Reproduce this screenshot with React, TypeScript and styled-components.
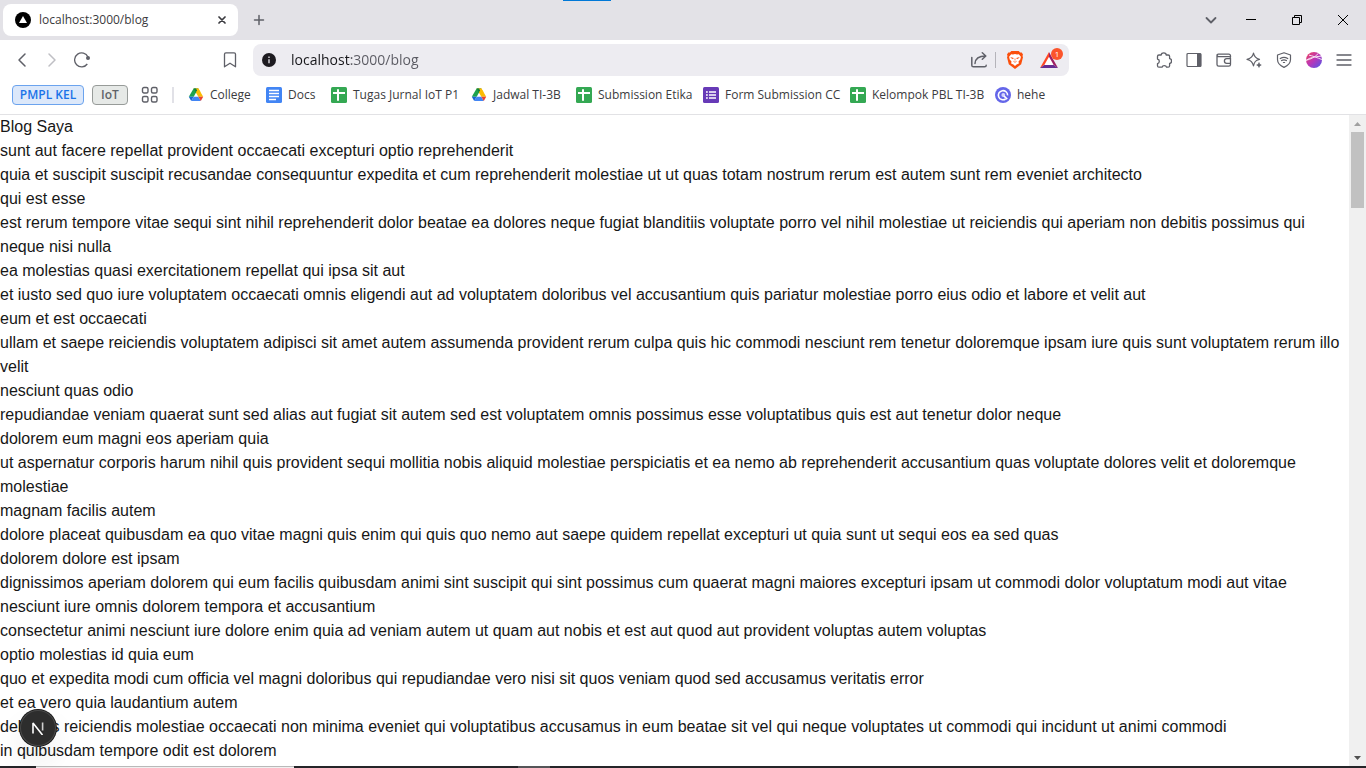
import React from "react";
import styled, { createGlobalStyle } from "styled-components";

const GlobalStyle = createGlobalStyle`
  *, *::before, *::after { box-sizing: border-box; }
  body { margin: 0; background: #fff; overflow: hidden; }
  button, input { font: inherit; margin: 0; }
`;

const uiFont = `"Segoe UI", "Open Sans", "Noto Sans", sans-serif`;

const Browser = styled.div`
  display: flex;
  flex-direction: column;
  height: 100vh;
  font-family: ${uiFont};
  font-size: 12px;
  color: #3b3b40;
`;

/* ---------- tab strip ---------- */

const TabStrip = styled.header`
  position: relative;
  flex: none;
  display: flex;
  align-items: center;
  height: 40px;
  padding-left: 3px;
  background: #e3e2e7;
`;

const LoadingMark = styled.span`
  position: absolute;
  top: 0;
  left: 563px;
  width: 48px;
  height: 1px;
  background: #0078d7;
`;

const Tab = styled.div`
  display: flex;
  align-items: center;
  width: 235px;
  height: 32px;
  padding: 0 8px 0 12px;
  border-radius: 8px;
  background: #fff;
`;

const TabTitle = styled.span`
  flex: 1;
  padding-left: 8px;
  line-height: 16px;
`;

const IconButton = styled.button<{ $w?: number; $h?: number }>`
  flex: none;
  display: flex;
  align-items: center;
  justify-content: center;
  width: ${(p) => p.$w ?? 30}px;
  height: ${(p) => p.$h ?? 32}px;
  padding: 0;
  border: 0;
  background: transparent;
  color: #5f6068;
`;

const WindowControls = styled.div`
  display: flex;
  margin-left: auto;
`;

/* ---------- toolbar ---------- */

const Toolbar = styled.div`
  flex: none;
  display: flex;
  align-items: center;
  height: 40px;
  padding: 0 7px;
`;

const NavGroup = styled.div`
  display: flex;
  justify-content: space-between;
  width: 238px;
  margin-right: 8px;
`;

const Cluster = styled.div`
  display: flex;
  align-items: center;
`;

const AddressBar = styled.form`
  flex: 1;
  min-width: 0;
  display: flex;
  align-items: center;
  height: 32px;
  padding-right: 5px;
  border-radius: 8px;
  background: #edecf1;
`;

const AddressInput = styled.input`
  flex: 1;
  min-width: 0;
  height: 24px;
  padding: 0 0 0 6px;
  border: 0;
  outline: 0;
  font-size: 14px;
  line-height: 24px;
  color: #4b4b52;
  background: linear-gradient(to right, #17171b 66px, #5a5a62 66px);
  background-clip: text;
  -webkit-text-fill-color: transparent;
`;

const AddressDivider = styled.span`
  width: 1px;
  height: 16px;
  margin-left: 1px;
  background: #b5b4ba;
`;

const BadgeHolder = styled.span`
  position: relative;
  display: flex;
`;

const Badge = styled.span`
  position: absolute;
  top: -4px;
  right: -5px;
  width: 12px;
  height: 12px;
  border-radius: 6px;
  background: #fb542b;
  color: #fff;
  font-size: 8px;
  line-height: 12px;
  text-align: center;
`;

const Extensions = styled.div`
  display: flex;
  margin-left: 80px;
`;

/* ---------- bookmarks ---------- */

const BookmarksBar = styled.nav`
  flex: none;
  display: flex;
  align-items: center;
  height: 35px;
  padding: 0 12px 4px;
  border-bottom: 1px solid #e2e2e5;
  white-space: nowrap;
  overflow: hidden;
`;

const GroupChip = styled.button<{ $w: number; $blue?: boolean }>`
  flex: none;
  width: ${(p) => p.$w}px;
  height: 20px;
  margin-right: 8px;
  padding: 0;
  border: 1px solid ${(p) => (p.$blue ? "#6ba3ee" : "#979b99")};
  border-radius: 4px;
  background: ${(p) => (p.$blue ? "#dce8fa" : "#e6e9e7")};
  color: ${(p) => (p.$blue ? "#1a73e8" : "#5f6368")};
  font-weight: 600;
  line-height: 18px;
`;

const BarDivider = styled.span`
  width: 2px;
  height: 16px;
  margin: 0 14px 0 8px;
  background: #e1e1e7;
`;

const Bookmark = styled.a<{ $w: number }>`
  flex: none;
  display: flex;
  align-items: center;
  gap: 6px;
  width: ${(p) => p.$w}px;
  line-height: 16px;
  color: inherit;
  text-decoration: none;

  svg { flex: none; }
`;

/* ---------- page ---------- */

const Viewport = styled.div`
  flex: 1;
  min-height: 0;
  display: flex;
`;

const Page = styled.main`
  flex: 1;
  min-width: 0;
  overflow: hidden;
  font-family: Arial, "Liberation Sans", sans-serif;
  font-size: 16px;
  line-height: 24px;
  color: #171717;

  h1, h2, p {
    margin: 0;
    font-size: inherit;
    font-weight: 400;
  }
`;

const Scrollbar = styled.div`
  flex: none;
  display: flex;
  flex-direction: column;
  align-items: center;
  width: 17px;
  background: #f0f0f0;
`;

const Thumb = styled.div`
  width: 13px;
  height: 76px;
  margin-bottom: auto;
  background: #c1c1c1;
`;

const DevButton = styled.button`
  position: fixed;
  left: 20px;
  bottom: 22px;
  display: flex;
  align-items: center;
  justify-content: center;
  width: 36px;
  height: 36px;
  padding: 0;
  border: 0;
  border-radius: 50%;
  background: #2d2d2d;
  box-shadow: 0 0 0 1px #171717, inset 0 0 0 1px #484848,
    0 16px 32px -8px rgba(0, 0, 0, 0.24);
`;

const Taskbar = styled.footer`
  flex: none;
  display: flex;
  height: 2px;
  padding-left: 36px;
  background: #252529;
`;

const TaskSearch = styled.span`
  width: 258px;
  border-top: 1px solid #b9b9b9;
  background: #f0f0f0;
`;

const TaskItem = styled.span`
  width: 32px;
  margin-left: 224px;
  background: #555558;
`;

/* ---------- icons ---------- */

type LineProps = { d: string; size?: number; w?: number; color?: string };

const Line = ({ d, size = 16, w = 1.3, color = "currentColor" }: LineProps) => (
  <svg width={size} height={size} viewBox={`0 0 ${size} ${size}`} fill="none"
    stroke={color} strokeWidth={w} strokeLinecap="round" strokeLinejoin="round" aria-hidden="true">
    <path d={d} />
  </svg>
);

const DriveIcon = () => (
  <svg width="16" height="16" viewBox="0 0 16 16" aria-hidden="true">
    <path d="M5.6 1.4h4.8l4.8 8.4h-4.9z" fill="#fbbc04" />
    <path d="M5.6 1.4h2.4L8 5.5 5.7 9.8H.8z" fill="#1ea34f" />
    <path d="M5.6 1.4h4.8L8 5.5z" fill="#188038" />
    <path d="M8 1.4h2.4l2.4 4.2L8 5.5 9.200 3.400z" fill="#fbbc04" />
    <path d="M.8 9.8h4.9L3.2 14z" fill="#1967d2" />
    <path d="M3.2 14l2.5-4.2h4.6l2.5 4.2z" fill="#4285f4" />
    <path d="M10.3 9.8h4.9L12.8 14z" fill="#ea4335" />
  </svg>
);

const DocsIcon = () => (
  <svg width="16" height="16" viewBox="0 0 16 16" aria-hidden="true">
    <rect width="16" height="16" rx="1.5" fill="#4285f4" />
    <path d="M3 3.5h10M3 6.5h10M3 9.5h10M3 12.5h7" stroke="#fff" strokeWidth="1.5" />
  </svg>
);

const SheetIcon = () => (
  <svg width="16" height="16" viewBox="0 0 16 16" aria-hidden="true">
    <rect width="16" height="16" rx="1.5" fill="#34a853" />
    <path d="M2 6h12M7 2.2v11.6" stroke="#fff" strokeWidth="2" />
  </svg>
);

const FormIcon = () => (
  <svg width="16" height="16" viewBox="0 0 16 16" aria-hidden="true">
    <rect width="16" height="16" rx="1.5" fill="#673ab7" />
    <path d="M3 5h1.8M3 8h1.8M3 11h1.8M6 5h7M6 8h7M6 11h7" stroke="#fff" strokeWidth="1.6" />
  </svg>
);

const HeheIcon = () => (
  <svg width="16" height="16" viewBox="0 0 16 16" aria-hidden="true">
    <circle cx="8" cy="8" r="8" fill="#6466e9" />
    <path d="M10.6 12A4.6 4.6 0 1 1 12.6 8.4" fill="none" stroke="#fff" strokeWidth="1.6" />
    <circle cx="8.3" cy="8" r="1.9" fill="#d5d6fb" />
    <path d="M9 9l3.2 3.2" stroke="#fff" strokeWidth="1.7" />
  </svg>
);

const BraveIcon = () => (
  <svg width="18" height="18" viewBox="0 0 18 18" aria-hidden="true">
    <path d="M5.3 0h7.4l1.4 1.6 1.6-.2 1.3 2.2-.5 1.3.5 1.3-1.8 7L9 18l-6.2-4.8L1 6.2l.5-1.3L1 3.6l1.3-2.2 1.6.2z" fill="#fb4f0c" />
    <path d="M5.2 3.3 7 3.6l2-.5 2 .5 1.8-.3 2.1 2.5-.6 2.6-1.8 2.100.400 2-2.300 1-1.600 1.400-1.600-1.400-2.300-1 .400-2-1.800-2.100-.6-2.6z" fill="#fff" />
    <path d="m4.700 6.600 2.700.500-.400.800zm8.600 0-2.700.500.400.800z" fill="#fb4f0c" stroke="#fb4f0c" strokeWidth=".4" />
    <path d="M9 7.500v2M7.400 10.300 9 11.300l1.600-1" stroke="#fb4f0c" strokeWidth=".7" fill="none" />
  </svg>
);

const BatIcon = () => (
  <svg width="18" height="16" viewBox="0 0 18 16" aria-hidden="true">
    <path d="M9 4.3 14.2 13.3H3.8z" fill="#fff" />
    <path d="M9 0v4.8L4.3 13 0 16z" fill="#ff4724" />
    <path d="M9 0l9 16-4.3-3L9 4.8z" fill="#9e1f63" />
    <path d="M0 16l4.3-3h9.4L18 16z" fill="#662d91" />
  </svg>
);

const ProfileIcon = () => (
  <svg width="16" height="16" viewBox="0 0 16 16" aria-hidden="true">
    <defs>
      <linearGradient id="orb" x1="0" y1="0" x2="1" y2="1">
        <stop offset="0" stopColor="#f0435c" />
        <stop offset=".5" stopColor="#b936b8" />
        <stop offset="1" stopColor="#4a57ea" />
      </linearGradient>
      <clipPath id="orb-edge"><circle cx="8" cy="8" r="8" /></clipPath>
    </defs>
    <g clipPath="url(#orb-edge)">
      <rect width="16" height="16" fill="url(#orb)" />
      <path d="M0 8.4C5 7.2 9 5 12.4 1.4M3 3.2c3 .4 8 2.4 13 4.4M0 8.4C4 5.4 9 4.6 15 4.2" stroke="#f6dff2" strokeWidth="1" fill="none" />
    </g>
  </svg>
);

const extensions = [
  {
    name: "Extensions",
    icon: <Line w={1.3} d="M1.5 4.4q0-1.4 1.4-1.4h2.3c0-2.9 5-2.9 5 0h2q1.4 0 1.4 1.4v2.2c2.6.2 2.6 4.6 0 4.8v2.3q0 1.5-1.4 1.5h-1.7c-.4-2.2-4-2.2-4.4 0H2.9q-1.4 0-1.4-1.5v-2c2.4-.5 2.4-4.2 0-4.7z" />,
  },
  {
    name: "Sidebar",
    icon: (
      <svg width="16" height="16" viewBox="0 0 16 16" aria-hidden="true">
        <rect x="1" y="1.5" width="14" height="13" rx="1" fill="none" stroke="currentColor" strokeWidth="1.2" />
        <path d="M11 1.5h4v13h-4z" fill="currentColor" />
      </svg>
    ),
  },
  {
    name: "Wallet",
    icon: <Line w={1.3} d="M14.5 5V4q0-1.8-1.8-1.8H2.3Q1 2.2 1 3.5v9q0 1.7 1.7 1.7h10q1.8 0 1.8-1.8v-1M1.2 3.5q.3 1.2 1.5 1.2h10.5q1.3 0 1.3 1.3v5.3h-3.8a2.3 2.3 0 0 1 0-4.6h3.8" />,
  },
  {
    name: "Leo",
    icon: (
      <svg width="16" height="16" viewBox="0 0 16 16" aria-hidden="true">
        <path d="M7.5 1q1 5.2 6 6.3-3 .7-4.2 2.2T7.5 14q-1-5.5-6.5-6.7Q6.5 6.2 7.5 1z" fill="none" stroke="currentColor" strokeWidth="1.2" strokeLinejoin="round" />
        <path d="M13 10.5q.3 2 2.3 2.5-2 .5-2.3 2.5-.4-2-2.4-2.5 2-.5 2.4-2.5z" fill="currentColor" stroke="currentColor" strokeWidth=".5" />
      </svg>
    ),
  },
  {
    name: "VPN",
    icon: <Line w={1.2} d="M8 .8 14.5 3v4.5q0 5-6.5 7.9-6.5-2.9-6.5-7.9V3zM4.3 6.6q3.7-2.6 7.4 0M5.6 8.6q2.4-1.6 4.8 0M7.4 10.5h1.2" />,
  },
  { name: "Profile", icon: <ProfileIcon /> },
  { name: "Menu", icon: <Line w={1.3} d="M1 3h14M1 8h14M1 13h14" /> },
];

const bookmarks = [
  { label: "College", icon: <DriveIcon />, width: 78 },
  { label: "Docs", icon: <DocsIcon />, width: 65 },
  { label: "Tugas Jurnal IoT P1", icon: <SheetIcon />, width: 140 },
  { label: "Jadwal TI-3B", icon: <DriveIcon />, width: 105 },
  { label: "Submission Etika", icon: <SheetIcon />, width: 127 },
  { label: "Form Submission CC", icon: <FormIcon />, width: 147 },
  { label: "Kelompok PBL TI-3B", icon: <SheetIcon />, width: 145 },
  { label: "hehe", icon: <HeheIcon />, width: 60 },
];

const posts = [
  ["sunt aut facere repellat provident occaecati excepturi optio reprehenderit", "quia et suscipit suscipit recusandae consequuntur expedita et cum reprehenderit molestiae ut ut quas totam nostrum rerum est autem sunt rem eveniet architecto"],
  ["qui est esse", "est rerum tempore vitae sequi sint nihil reprehenderit dolor beatae ea dolores neque fugiat blanditiis voluptate porro vel nihil molestiae ut reiciendis qui aperiam non debitis possimus qui neque nisi nulla"],
  ["ea molestias quasi exercitationem repellat qui ipsa sit aut", "et iusto sed quo iure voluptatem occaecati omnis eligendi aut ad voluptatem doloribus vel accusantium quis pariatur molestiae porro eius odio et labore et velit aut"],
  ["eum et est occaecati", "ullam et saepe reiciendis voluptatem adipisci sit amet autem assumenda provident rerum culpa quis hic commodi nesciunt rem tenetur doloremque ipsam iure quis sunt voluptatem rerum illo velit"],
  ["nesciunt quas odio", "repudiandae veniam quaerat sunt sed alias aut fugiat sit autem sed est voluptatem omnis possimus esse voluptatibus quis est aut tenetur dolor neque"],
  ["dolorem eum magni eos aperiam quia", "ut aspernatur corporis harum nihil quis provident sequi mollitia nobis aliquid molestiae perspiciatis et ea nemo ab reprehenderit accusantium quas voluptate dolores velit et doloremque molestiae"],
  ["magnam facilis autem", "dolore placeat quibusdam ea quo vitae magni quis enim qui quis quo nemo aut saepe quidem repellat excepturi ut quia sunt ut sequi eos ea sed quas"],
  ["dolorem dolore est ipsam", "dignissimos aperiam dolorem qui eum facilis quibusdam animi sint suscipit qui sint possimus cum quaerat magni maiores excepturi ipsam ut commodi dolor voluptatum modi aut vitae"],
  ["nesciunt iure omnis dolorem tempora et accusantium", "consectetur animi nesciunt iure dolore enim quia ad veniam autem ut quam aut nobis et est aut quod aut provident voluptas autem voluptas"],
  ["optio molestias id quia eum", "quo et expedita modi cum officia vel magni doloribus qui repudiandae vero nisi sit quos veniam quod sed accusamus veritatis error"],
  ["et ea vero quia laudantium autem", "delectus reiciendis molestiae occaecati non minima eveniet qui voluptatibus accusamus in eum beatae sit vel qui neque voluptates ut commodi qui incidunt ut animi commodi"],
  ["in quibusdam tempore odit est dolorem"],
];

const ScrollArrow = ({ up }: { up?: boolean }) => (
  <svg width="7" height="4" viewBox="0 0 7 4" aria-hidden="true">
    <path d={up ? "M0 4 3.5 0 7 4z" : "M0 0h7L3.5 4z"} fill={up ? "#a0a0a0" : "#505050"} />
  </svg>
);

export default function App() {
  return (
    <Browser>
      <GlobalStyle />
      <TabStrip>
        <LoadingMark />
        <Tab>
          <svg width="16" height="16" viewBox="0 0 16 16" aria-hidden="true">
            <circle cx="8" cy="8" r="8" fill="#000" />
            <path d="M8 4 12 11H4z" fill="#fff" />
          </svg>
          <TabTitle>localhost:3000/blog</TabTitle>
          <IconButton $w={16} $h={16} aria-label="Close tab">
            <Line size={8} w={1.7} color="#3b3b40" d="M1 1l6 6M7 1 1 7" />
          </IconButton>
        </Tab>
        <IconButton $w={42} aria-label="New tab">
          <Line size={12} w={1.5} d="M6 1.5v9M1.5 6h9" />
        </IconButton>
        <WindowControls>
          <IconButton $w={34} aria-label="Search tabs">
            <Line size={12} w={1.8} d="M1.5 4 6 8.5 10.5 4" />
          </IconButton>
          <IconButton $w={46} aria-label="Minimize">
            <svg width="10" height="10" aria-hidden="true"><path d="M0 4.5h10" stroke="#000" /></svg>
          </IconButton>
          <IconButton $w={46} aria-label="Restore">
            <svg width="10" height="10" fill="none" stroke="#000" aria-hidden="true">
              <path d="M.5 2.5h7v7h-7zM2.5 2.5v-2h7v7h-2" />
            </svg>
          </IconButton>
          <IconButton $w={46} aria-label="Close">
            <svg width="10" height="10" aria-hidden="true"><path d="M0 0l10 10M10 0 0 10" stroke="#000" /></svg>
          </IconButton>
        </WindowControls>
      </TabStrip>

      <Toolbar>
        <NavGroup>
          <Cluster>
            <IconButton aria-label="Back"><Line w={1.5} d="M11 2 5 8l6 6" /></IconButton>
            <IconButton aria-label="Forward"><Line w={1.5} color="#bfbfc4" d="M5 2l6 6-6 6" /></IconButton>
            <IconButton aria-label="Reload">
              <svg width="16" height="16" viewBox="0 0 16 16" fill="none" stroke="currentColor" strokeWidth="1.3" aria-hidden="true">
                <path d="M13.3 12A7 7 0 1 1 14 5" />
                <circle cx="14" cy="6" r="2" fill="currentColor" stroke="none" />
              </svg>
            </IconButton>
          </Cluster>
          <IconButton aria-label="Bookmark this page">
            <Line w={1.3} d="M2.5 14.8V2.2q0-1.4 1.4-1.4h8.2q1.4 0 1.4 1.4v12.6L8 11.2z" />
          </IconButton>
        </NavGroup>
        <AddressBar onSubmit={(e) => e.preventDefault()}>
          <IconButton type="button" $w={32} aria-label="Site information">
            <svg width="14" height="14" viewBox="0 0 14 14" aria-hidden="true">
              <circle cx="7" cy="7" r="7" fill="#1d1b20" />
              <path d="M7 6.2v4M7 3.6v1.4" stroke="#edecf1" strokeWidth="1.3" />
            </svg>
          </IconButton>
          <AddressInput aria-label="Address" defaultValue="localhost:3000/blog" />
          <IconButton type="button" aria-label="Share">
            <Line w={1.5} d="M.8 5.5V13.2q0 1.6 1.6 1.6h11.2q1.6 0 1.6-1.6M4 11.5C4.3 7 7 4 14.5 4M11.3.8 14.8 4l-3.5 3.3" />
          </IconButton>
          <AddressDivider />
          <IconButton type="button" $w={38} aria-label="Brave Shields"><BraveIcon /></IconButton>
          <IconButton type="button" aria-label="Brave Rewards">
            <BadgeHolder><BatIcon /><Badge>1</Badge></BadgeHolder>
          </IconButton>
        </AddressBar>
        <Extensions>
          {extensions.map((e) => (
            <IconButton key={e.name} aria-label={e.name}>{e.icon}</IconButton>
          ))}
        </Extensions>
      </Toolbar>

      <BookmarksBar>
        <GroupChip $w={72} $blue>PMPL KEL</GroupChip>
        <GroupChip $w={36}>IoT</GroupChip>
        <IconButton $w={28} $h={20} aria-label="All bookmarks">
          <svg width="18" height="18" viewBox="0 0 18 18" fill="none" stroke="currentColor" strokeWidth="1.4" aria-hidden="true">
            <rect x="1.5" y="1.5" width="5.5" height="5.5" rx="1.5" />
            <rect x="10.5" y="1.5" width="5.5" height="5.5" rx="1.5" />
            <rect x="1.5" y="10.5" width="5.5" height="5.5" rx="1.5" />
            <rect x="10.5" y="10.5" width="5.5" height="5.5" rx="1.5" />
          </svg>
        </IconButton>
        <BarDivider />
        {bookmarks.map((b) => (
          <Bookmark key={b.label} href="#" $w={b.width}>{b.icon}{b.label}</Bookmark>
        ))}
      </BookmarksBar>

      <Viewport>
        <Page>
          <h1>Blog Saya</h1>
          {posts.map(([title, body]) => (
            <article key={title}>
              <h2>{title}</h2>
              {body && <p>{body}</p>}
            </article>
          ))}
        </Page>
        <Scrollbar>
          <IconButton $w={17} $h={17} aria-label="Scroll up"><ScrollArrow up /></IconButton>
          <Thumb />
          <IconButton $w={17} $h={17} aria-label="Scroll down"><ScrollArrow /></IconButton>
        </Scrollbar>
      </Viewport>

      <DevButton aria-label="Open Next.js Dev Tools">
        <svg width="14" height="14" viewBox="0 0 14 14" fill="none" stroke="#fff" strokeWidth="1.6" aria-hidden="true">
          <path d="M2 12.5V2l9.5 12" strokeLinejoin="bevel" />
          <path d="M11.6 1.5v8" stroke="#d0d0d0" />
        </svg>
      </DevButton>

      <Taskbar>
        <TaskSearch />
        <TaskItem />
      </Taskbar>
    </Browser>
  );
}
